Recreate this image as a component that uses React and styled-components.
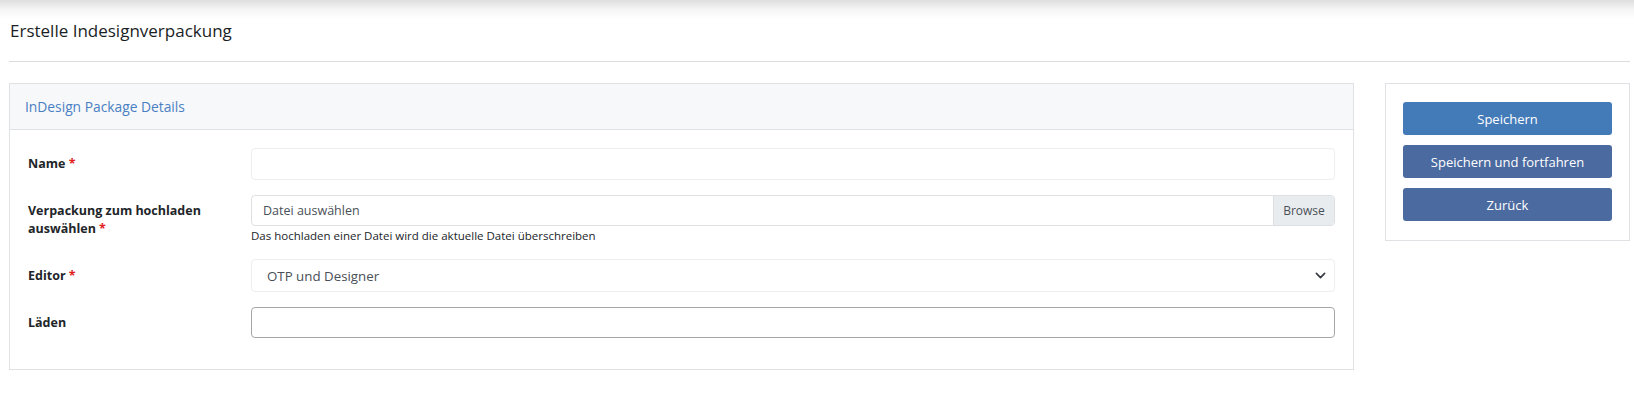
import styled, { createGlobalStyle } from "styled-components";

const GlobalStyle = createGlobalStyle`
  body {
    margin: 0;
    background: #fff;
    font-family: "Open Sans", "Noto Sans", sans-serif;
    color: #212529;
  }
`;

const Page = styled.div`
  min-height: 412px;
  padding: 0 4px 0 9px;
  background: linear-gradient(#dedede 0, #f4f4f4 9px, #fff 19px) no-repeat;
  background-size: 100% 19px;
`;

const PageHeader = styled.div`
  height: 62px;
  border-bottom: 1px solid #dcdcdc;
  display: flex;
  align-items: center;
  padding-left: 1px;
  box-sizing: border-box;
`;

const Title = styled.h1`
  margin: 0;
  font-size: 17px;
  font-weight: 500;
  color: #1a1e25;
`;

const Content = styled.div`
  display: flex;
  align-items: flex-start;
  gap: 31px;
  margin-top: 21px;
`;

const Card = styled.section`
  width: 1345px;
  border: 1px solid #dfe1e4;
  box-sizing: border-box;
`;

const CardHeader = styled.div`
  height: 46px;
  box-sizing: border-box;
  background: #f7f8fa;
  border-bottom: 1px solid #dfe1e4;
  display: flex;
  align-items: center;
  padding-left: 15px;
  font-size: 13.8px;
  color: #4a80c3;
`;

const CardBody = styled.div`
  padding: 18px 18px 31px;
  display: flex;
  flex-direction: column;
  gap: 15px;
`;

const Row = styled.div`
  display: grid;
  grid-template-columns: 223px 1fr;
  align-items: center;
`;

const Label = styled.label`
  font-size: 12.5px;
  font-weight: 700;
  line-height: 18px;
  color: #212529;
`;

const Req = styled.span`
  color: #e0201c;
`;

const Field = styled.div`
  display: flex;
  flex-direction: column;
`;

const TextInput = styled.input`
  height: ${(p) => p.$h}px;
  box-sizing: border-box;
  border: 1px solid ${(p) => (p.$strong ? "#a6a6a6" : "#eceef0")};
  border-radius: 4px;
  padding: 0 12px;
  font: inherit;
  font-size: 14px;
  outline: none;
  background: #fff;
`;

const FileBox = styled.div`
  display: flex;
  height: 31px;
  box-sizing: border-box;
  border: 1px solid #dde0e3;
  border-radius: 4px;
  overflow: hidden;
`;

const FileText = styled.div`
  flex: 1;
  display: flex;
  align-items: center;
  padding-left: 11px;
  font-size: 12.5px;
  color: #495057;
`;

const BrowseBtn = styled.div`
  width: 60px;
  display: flex;
  align-items: center;
  justify-content: center;
  background: #e9ecef;
  border-left: 1px solid #dde0e3;
  font-size: 12px;
  color: #495057;
`;

const Help = styled.small`
  display: block;
  margin-top: 2px;
  font-size: 11.5px;
  line-height: 16px;
  color: #212529;
`;

const SelectBox = styled.div`
  height: 33px;
  box-sizing: border-box;
  border: 1px solid #eceef0;
  border-radius: 4px;
  display: flex;
  align-items: center;
  justify-content: space-between;
  padding: 0 8px 0 15px;
  font-size: 13.3px;
  color: #495057;

  svg {
    width: 11px;
    height: 11px;
  }
`;

const Panel = styled.aside`
  width: 245px;
  box-sizing: border-box;
  border: 1px solid #dfe1e4;
  padding: 18px 17px 19px 17px;
  display: flex;
  flex-direction: column;
  gap: 10px;
`;

const Button = styled.button`
  height: 33px;
  width: 100%;
  border: none;
  border-radius: 3px;
  background: ${(p) => (p.$primary ? "#437bb9" : "#4b6a9f")};
  color: #fff;
  font-family: inherit;
  font-size: 13px;
  cursor: pointer;
`;

const App = () => {
  return (
    <>
      <GlobalStyle />
      <Page>
        <PageHeader>
          <Title>Erstelle Indesignverpackung</Title>
        </PageHeader>
        <Content>
          <Card>
            <CardHeader>InDesign Package Details</CardHeader>
            <CardBody>
              <Row>
                <Label>
                  Name <Req>*</Req>
                </Label>
                <TextInput $h={32} />
              </Row>
              <Row>
                <Label>
                  Verpackung zum hochladen
                  <br />
                  auswählen <Req>*</Req>
                </Label>
                <Field>
                  <FileBox>
                    <FileText>Datei auswählen</FileText>
                    <BrowseBtn>Browse</BrowseBtn>
                  </FileBox>
                  <Help>Das hochladen einer Datei wird die aktuelle Datei überschreiben</Help>
                </Field>
              </Row>
              <Row>
                <Label>
                  Editor <Req>*</Req>
                </Label>
                <SelectBox>
                  <span>OTP und Designer</span>
                  <svg viewBox="0 0 16 16">
                    <path
                      d="M2 5l6 6 6-6"
                      fill="none"
                      stroke="#343a40"
                      strokeWidth="2.4"
                      strokeLinecap="round"
                      strokeLinejoin="round"
                    />
                  </svg>
                </SelectBox>
              </Row>
              <Row>
                <Label>Läden</Label>
                <TextInput $h={31} $strong />
              </Row>
            </CardBody>
          </Card>
          <Panel>
            <Button $primary>Speichern</Button>
            <Button>Speichern und fortfahren</Button>
            <Button>Zurück</Button>
          </Panel>
        </Content>
      </Page>
    </>
  );
};

export default App;
